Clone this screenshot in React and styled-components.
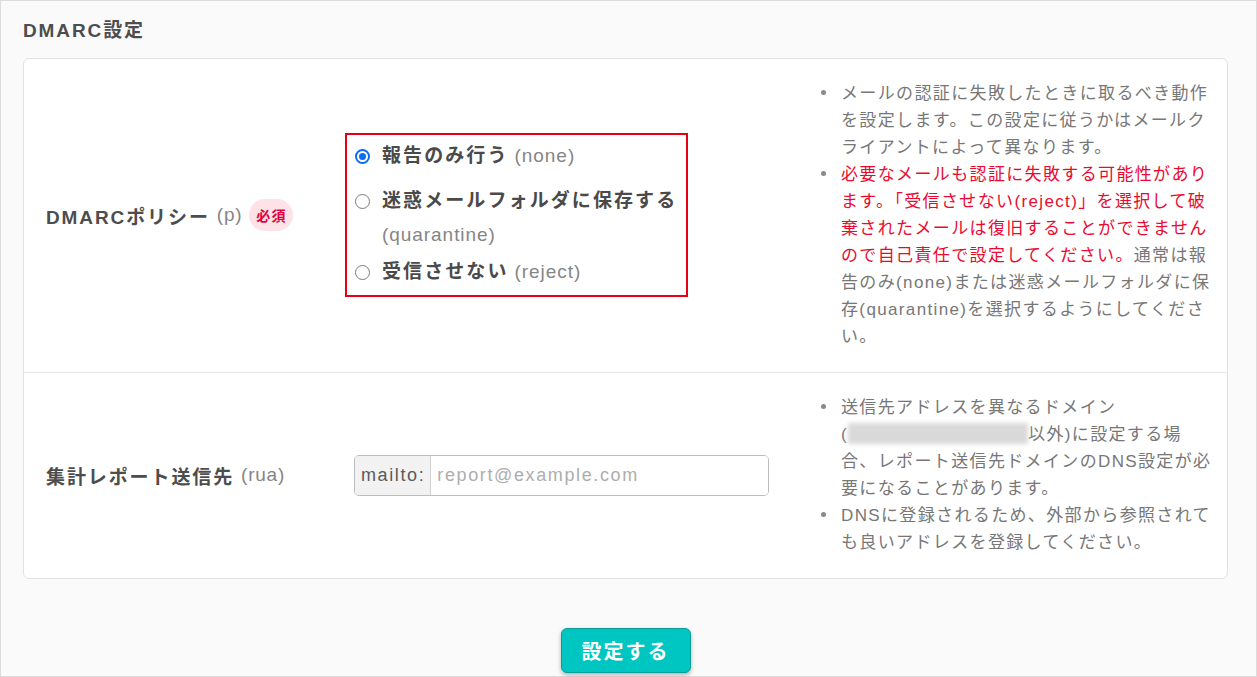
import React from "react";
import styled, { createGlobalStyle } from "styled-components";

const Global = createGlobalStyle`
  html, body { margin: 0; padding: 0; background: #fafafa; }
  body {
    font-family: "Liberation Sans", "Noto Sans CJK JP", sans-serif;
    color: #555;
  }
  * { box-sizing: border-box; }
`;

const Frame = styled.div`
  width: 1257px;
  height: 677px;
  border: 1px solid #dcdcdc;
  background: #fafafa;
  padding: 17px 28px 0 22px;
  display: flex;
  flex-direction: column;
`;

const Title = styled.h2`
  margin: 0 0 14px;
  font-size: 19px;
  line-height: 26px;
  font-weight: 700;
  letter-spacing: 0.1em;
  color: #4d4d4d;
`;

const Card = styled.section`
  background: #fff;
  border: 1px solid #e2e2e2;
  border-radius: 6px;
`;

const Row = styled.div`
  display: grid;
  grid-template-columns: 330px 452px 420px;
  align-items: center;
  padding: 21px 0 22px;
  border-top: ${(p) => (p.$first ? "none" : "1px solid #e6e6e6")};
`;

const LabelCell = styled.div`
  padding-left: 22px;
  display: flex;
  align-items: center;
  font-size: 19px;
  font-weight: 700;
  letter-spacing: 0.1em;
  color: #4d4d4d;
`;

const Sub = styled.span`
  font-weight: 400;
  color: #858585;
  letter-spacing: 0.04em;
  margin-left: 7px;
`;

const Badge = styled.span`
  margin-left: 7px;
  height: 32px;
  padding: 0 6px 0 7px;
  border-radius: 16px;
  background: #fde3e8;
  color: #e4003a;
  font-size: 14px;
  font-weight: 700;
  letter-spacing: 0.08em;
  display: inline-flex;
  align-items: center;
`;

const RadioGroup = styled.div`
  width: fit-content;
  margin-left: -9px;
  border: 2px solid #e60012;
  padding: 4px 9px 6px 7px;
  display: flex;
  flex-direction: column;
  gap: 3px;
`;

const RadioItem = styled.label`
  display: flex;
  align-items: flex-start;
  margin-top: ${(p) => (p.$spaced ? "8px" : "0")};
  font-size: 19px;
  line-height: 34px;
  font-weight: 700;
  letter-spacing: 0.11em;
  color: #4a4a4a;
`;

const Circle = styled.span`
  flex: none;
  width: 15px;
  height: 15px;
  margin: 10px 12px 0 1px;
  border-radius: 50%;
  background: #fff;
  border: ${(p) => (p.$on ? "2px solid #0a6cf5" : "1px solid #7a7a7a")};
  display: flex;
  align-items: center;
  justify-content: center;
  &::after {
    content: "";
    display: ${(p) => (p.$on ? "block" : "none")};
    width: 7px;
    height: 7px;
    border-radius: 50%;
    background: #0a6cf5;
  }
`;

const Opt = styled.span`
  font-weight: 400;
  color: #858585;
  letter-spacing: 0.05em;
  margin-left: 6px;
`;

const OptBlock = styled.span`
  display: block;
  font-weight: 400;
  color: #858585;
  letter-spacing: 0.05em;
`;

const InputGroup = styled.div`
  width: 415px;
  height: 41px;
  display: flex;
  border: 1px solid #bdbdbd;
  border-radius: 5px;
  overflow: hidden;
  font-size: 18px;
  letter-spacing: 0.09em;
`;

const Addon = styled.span`
  display: flex;
  align-items: center;
  padding: 0 5px 0 6px;
  background: #f2f2f2;
  border-right: 1px solid #d0d0d0;
  color: #5a5a5a;
`;

const Field = styled.input`
  flex: 1;
  border: none;
  outline: none;
  padding: 0 6px;
  font: inherit;
  letter-spacing: inherit;
  color: #444;
  &::placeholder { color: #adadad; }
`;

const Help = styled.ul`
  margin: 0;
  padding: 0 8px 0 16px;
  list-style: none;
  font-size: 17px;
  line-height: 27px;
  letter-spacing: 0.08em;
  color: #777;
`;

const Item = styled.li`
  padding-left: 19px;
  &::before {
    content: "";
    display: inline-block;
    width: 5px;
    height: 5px;
    border-radius: 50%;
    background: #8a8a8a;
    margin: 0 15px 0 -20px;
    vertical-align: 4px;
  }
`;

const Warn = styled.span`
  color: #ea0a30;
`;

const Keep = styled.span`
  white-space: nowrap;
`;

const Masked = styled.span`
  display: inline-block;
  width: 180px;
  height: 21px;
  vertical-align: -4px;
  background: #d9d9d9;
  filter: blur(2px);
`;

const Footer = styled.div`
  display: flex;
  justify-content: center;
  padding-top: 49px;
`;

const Submit = styled.button`
  width: 130px;
  height: 45px;
  border: 1px solid #0a9c98;
  border-radius: 6px;
  background: #00c6c2;
  color: #fff;
  font-family: inherit;
  font-size: 20px;
  font-weight: 700;
  letter-spacing: 0.1em;
  box-shadow: 0 2px 4px rgba(0, 0, 0, 0.3);
  cursor: pointer;
`;

export default function App() {
  return (
    <>
      <Global />
      <Frame>
        <Title>DMARC設定</Title>
        <Card>
          <Row $first>
            <LabelCell>
              DMARCポリシー<Sub>(p)</Sub>
              <Badge>必須</Badge>
            </LabelCell>
            <div>
              <RadioGroup>
                <RadioItem>
                  <Circle $on />
                  <span>
                    報告のみ行う<Opt>(none)</Opt>
                  </span>
                </RadioItem>
                <RadioItem $spaced>
                  <Circle />
                  <span>
                    迷惑メールフォルダに保存する
                    <OptBlock>(quarantine)</OptBlock>
                  </span>
                </RadioItem>
                <RadioItem>
                  <Circle />
                  <span>
                    受信させない<Opt>(reject)</Opt>
                  </span>
                </RadioItem>
              </RadioGroup>
            </div>
            <Help>
              <Item>
                メールの認証に失敗したときに取るべき動作を設定します。この設定に従うかはメールクライアントによって異なります。
              </Item>
              <Item>
                <Warn>
                  必要なメールも認証に失敗する可能性があります。「受信させない(reject)」を選択して破棄されたメールは復旧することができませんので自己責任で設定してください。
                </Warn>
                通常は報告のみ(none)または迷惑メールフォルダに保存(quarantine)を選択するようにしてください。
              </Item>
            </Help>
          </Row>
          <Row>
            <LabelCell>
              集計レポート送信先<Sub>(rua)</Sub>
            </LabelCell>
            <div>
              <InputGroup>
                <Addon>mailto:</Addon>
                <Field placeholder="report@example.com" />
              </InputGroup>
            </div>
            <Help>
              <Item>
                送信先アドレスを異なるドメイン
                <Keep>
                  (<Masked />以外)
                </Keep>
                に設定する場合、レポート送信先ドメインのDNS設定が必要になることがあります。
              </Item>
              <Item>DNSに登録されるため、外部から参照されても良いアドレスを登録してください。</Item>
            </Help>
          </Row>
        </Card>
        <Footer>
          <Submit>設定する</Submit>
        </Footer>
      </Frame>
    </>
  );
}
